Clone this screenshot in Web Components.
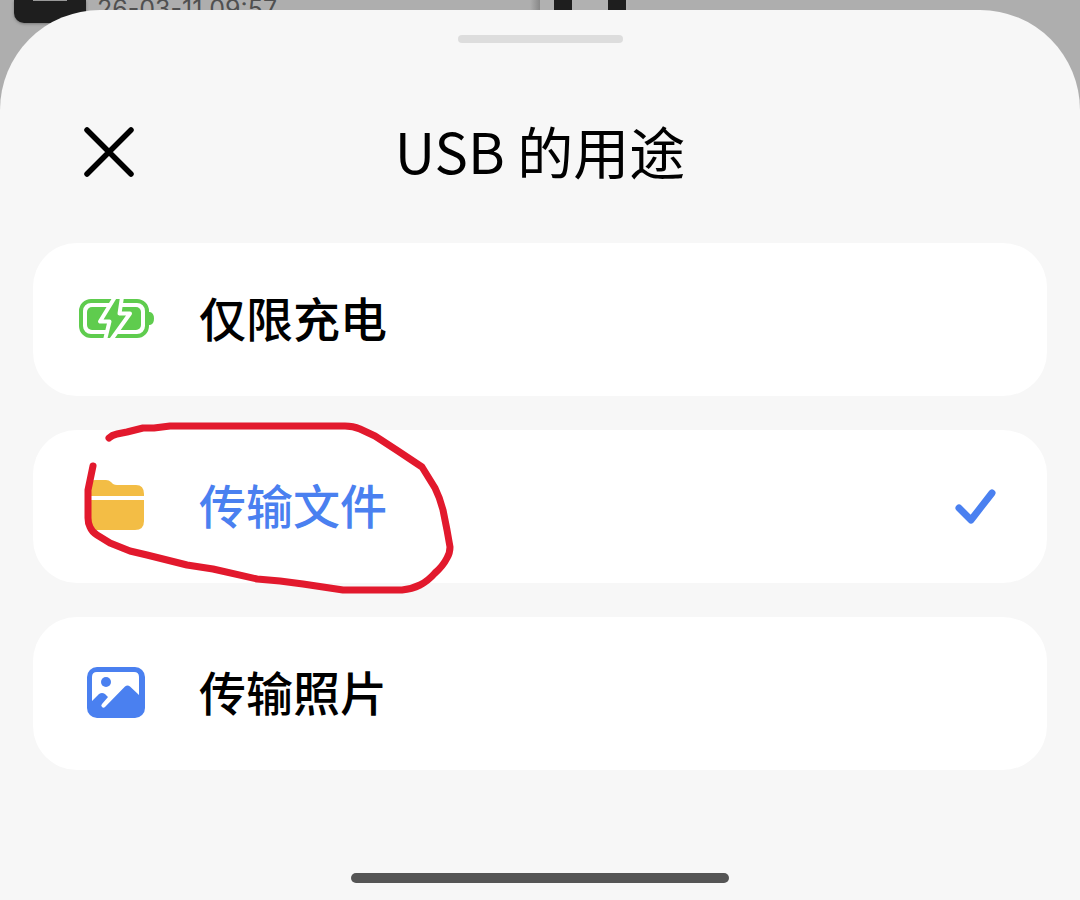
<!DOCTYPE html>
<html lang="zh-CN">
<head>
<meta charset="utf-8">
<meta name="viewport" content="width=device-width, initial-scale=1">
<title>USB 的用途</title>
<style>
  body { margin: 0; font-family: "Noto Sans CJK SC", sans-serif; color: #000; background: #aeaeae; }
</style>
</head>
<body>
<usb-screen></usb-screen>
<script>
const define = (name, html, setup) => {
  const template = document.createElement('template');
  template.innerHTML = html;
  customElements.define(name, class extends HTMLElement {
    connectedCallback() {
      if (this.shadowRoot) return;
      this.attachShadow({ mode: 'open' }).append(template.content.cloneNode(true));
      if (setup) setup(this);
    }
  });
};

// Dimmed page that lies behind the sheet
define('dimmed-page', `
  <style>
    :host { display: grid; grid-template-columns: 1fr 1fr; align-content: start; background: #aeaeae; }
    .item { display: flex; gap: 11px; height: 24px; padding-left: 14px; background: linear-gradient(to left, #888, #aeaeae 10px); }
    .thumb { width: 72px; height: 23px; border-radius: 0 0 10px 10px; background: #1e1e1e; display: flex; justify-content: center; box-shadow: 0 1px 3px #777; }
    .thumb i { width: 34px; height: 1px; background: #999; }
    time { font: 25px/18px Inter, sans-serif; color: #505050; }
    .preview { display: flex; gap: 36px; padding-left: 14px; background: #b1b1b1; width: 74px; }
    .preview i { width: 18px; background: #1e1e1e; flex: none; }
  </style>
  <div class="item"><span class="thumb"><i></i></span><time>26-03-11 09:57</time></div>
  <div class="preview"><i></i><i></i></div>
`);

define('close-button', `
  <style>
    :host { display: block; }
    button { display: block; padding: 0; border: 0; background: none; color: inherit; cursor: pointer; }
    svg { display: block; }
  </style>
  <button type="button" aria-label="关闭">
    <svg width="54" height="54" viewBox="0 0 54 54" fill="none" stroke="currentColor" stroke-width="5.500" stroke-linecap="round"><path d="M5 4L49 48M49 4L5 48"/></svg>
  </button>
`);

define('bottom-sheet', `
  <style>
    :host { display: flex; flex-direction: column; box-sizing: border-box; padding: 25px 33px 17px; background: #f7f7f7; border-radius: 100px 100px 0 0; }
    .grip { width: 165px; height: 8px; border-radius: 4px; background: #ddd; align-self: center; }
    header { display: grid; grid-template-columns: 1fr auto 1fr; align-items: center; height: 120px; margin: 50px 0 30px; padding: 0 49px; }
    .home { width: 378px; max-width: 60%; height: 10px; border-radius: 5px; background: #555; align-self: center; margin-top: auto; }
  </style>
  <div class="grip"></div>
  <header><slot name="action"></slot><slot name="title"></slot></header>
  <slot></slot>
  <div class="home"></div>
`);

define('option-card', `
  <style>
    :host { display: block; position: relative; background: #fff; border-radius: 44px; }
    ::slotted(label) { display: flex; align-items: center; gap: 45px; height: 153px; padding: 0 51px 0 47px; cursor: pointer; }
  </style>
  <slot></slot><slot name="mark"></slot>
`);

const icons = {
  battery: `<rect x="1" y="8" width="66" height="35" rx="10" fill="none" stroke="#5fcc4e" stroke-width="4"/>
    <rect x="7" y="14" width="54" height="23" rx="5" fill="#5fcc4e"/>
    <path d="M69 19h1q4 1 4 6.500t-4 6.500h-1z" fill="#5fcc4e"/>
    <path d="M34 6H41L39 20H50L33 45H26L29 29H20z" fill="#5fcc4e"/>
    <path d="M35 4L20 28.500H29.500L25 47M42 4L39.500 20.500H50L31 47" fill="none" stroke="#fff" stroke-width="4" stroke-linejoin="round"/>`,
  folder: `<path d="M7 16V8q0-8 8-8h11q3 0 5 2l2 2q2 1 4 1h19q8 0 8 9v2z" fill="#f3bd45"/>
    <path d="M7 20H64V41q0 9-9 9H16q-9 0-9-9z" fill="#f3bd45"/>`,
  photo: `<rect x="7" width="58" height="51" rx="10" fill="#4a80f0"/>
    <path d="M12 34V10q0-5 5-5H54q5 0 5 5V28L50 19.500q-2.500-2-5 0L25 40q-1.500 1.500-3 0t0-3l6-7l-3-3q-3-2-6 0z" fill="#fff"/>
    <circle cx="26" cy="15" r="5" fill="#4a80f0"/>`
};
define('option-icon', `
  <style>:host { display: block; flex: none; } svg { display: block; overflow: visible; }</style>
  <svg width="74" height="53" viewBox="0 0 74 53" aria-hidden="true"></svg>
`, el => { el.shadowRoot.querySelector('svg').innerHTML = icons[el.getAttribute('name')]; });

// Freehand red loop drawn round an option
define('pen-circle', `
  <style>
    :host { position: absolute; left: 0; top: 0; pointer-events: none; }
    svg { display: block; overflow: visible; }
  </style>
  <svg width="420" height="153" viewBox="0 0 420 153" fill="none" stroke="#e2192d" stroke-width="7" stroke-linecap="round" stroke-linejoin="round" aria-hidden="true">
    <path d="M76 8Q79 5 84 4L94 2L110 -2L121 -2L137 -4H312Q320 -4 327 -1L342 6L365 21L377 29L389 37L402 58Q407 68 410 80L414 100L417 117Q417 123 414 128Q410 136 402 143Q395 151 387 155Q379 159 369 160H310L270 154L247 151L224 149L180 139L154 135L114 125L97 121L77 113L64 105Q59 102 57 97Q55 93 55 88V60L60 36"/>
  </svg>
`);

define('usb-options', `
  <style>
    :host { display: block; }
    fieldset { display: grid; gap: 34px; margin: 0; padding: 0; border: 0; min-width: 0; }
    label { font-size: 47px; line-height: 68px; font-weight: 500; }
    label span { flex: 1; padding-bottom: 6px; }
    label:has(:checked) { color: #4a80f0; }
    input { appearance: none; width: 42px; height: 42px; margin: 0; outline: 0; }
    input:checked {
      background: no-repeat center url("data:image/svg+xml,%3Csvg xmlns='http://www.w3.org/2000/svg' width='42' height='42' fill='none' stroke='%234a80f0' stroke-width='7' stroke-linecap='round' stroke-linejoin='round'%3E%3Cpath d='M5 22L17 34L38 7'/%3E%3C/svg%3E");
    }
    :focus-visible { outline: 3px solid #4a80f0; border-radius: 8px; }
  </style>
  <fieldset aria-label="USB 的用途">
    <option-card><label><option-icon name="battery"></option-icon><span>仅限充电</span><input type="radio" name="use"></label></option-card>
    <option-card><label><option-icon name="folder"></option-icon><span>传输文件</span><input type="radio" name="use" checked></label><pen-circle slot="mark"></pen-circle></option-card>
    <option-card><label><option-icon name="photo"></option-icon><span>传输照片</span><input type="radio" name="use"></label></option-card>
  </fieldset>
`);

define('usb-screen', `
  <style>
    :host { display: grid; min-height: 100vh; }
    dimmed-page, bottom-sheet { grid-area: 1 / 1; min-width: 0; }
    bottom-sheet { margin-top: 10px; z-index: 1; }
    h1 { margin: 0; padding-bottom: 6px; font-size: 56px; line-height: 80px; font-weight: 400; }
  </style>
  <dimmed-page></dimmed-page>
  <bottom-sheet>
    <close-button slot="action"></close-button>
    <h1 slot="title">USB 的用途</h1>
    <usb-options></usb-options>
  </bottom-sheet>
`);
</script>
</body>
</html>
